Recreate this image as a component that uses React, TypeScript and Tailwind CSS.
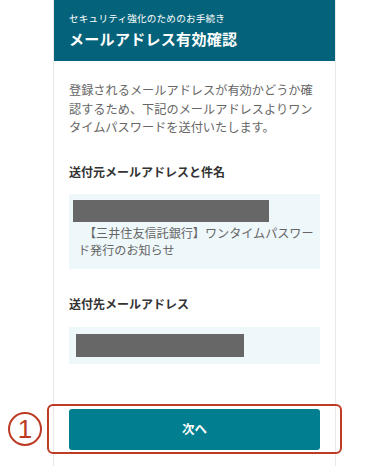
import React from 'react';

const jp = { fontFamily: '"Noto Sans CJK JP", "Noto Sans", sans-serif' };

export default function App() {
  return (
    <div className="relative w-[390px] h-[466px] bg-white overflow-hidden" style={jp}>
      <div className="ml-[53px] w-[283px] min-h-[466px] border-x border-[#e9e9e9] bg-white">
        {/* Header */}
        <div className="bg-[#04637a] pl-[15px] pt-[11px] pb-[11px] text-white">
          <p className="text-[9.6px] leading-[14px] tracking-[0.2px]">セキュリティ強化のためのお手続き</p>
          <h1 className="mt-[3px] text-[15px] leading-[22px] font-bold tracking-[0.3px]">メールアドレス有効確認</h1>
        </div>

        <div className="px-[15px] pt-[20px]">
          <p className="text-[12.2px] leading-[18.5px] text-[#666]">
            登録されるメールアドレスが有効かどうか確認するため、下記のメールアドレスよりワンタイムパスワードを送付いたします。
          </p>

          {/* Sender */}
          <h3 className="mt-[26px] text-[12px] leading-[18px] font-bold text-[#333]">送付元メールアドレスと件名</h3>
          <div className="mt-[13px] bg-[#eef7fa] pl-[9px] pr-[8px] pt-[6px] pb-[10px]">
            <div className="-ml-[5px] w-[196px] h-[22px] bg-[#676767]"></div>
            <p className="mt-[2px] indent-[6px] text-[12.1px] leading-[17.5px] text-[#666]">
              <span className="whitespace-nowrap">【三井住友信託銀行】ワンタイムパスワー</span>
              <br />
              ド発行のお知らせ
            </p>
          </div>

          {/* Recipient */}
          <h3 className="mt-[26px] text-[12px] leading-[18px] font-bold text-[#333]">送付先メールアドレス</h3>
          <div className="mt-[14px] bg-[#eef7fa] px-[7px] py-[7px]">
            <div className="w-[168px] h-[23px] bg-[#676767]"></div>
          </div>

          {/* Next button */}
          <div className="relative mt-[45px]">
            <button className="w-full h-[41px] rounded-[3px] bg-[#017f90] text-white text-[12.5px] font-bold">
              次へ
            </button>
            <div className="absolute -left-[22px] -right-[22px] -top-[5px] -bottom-[4px] border-2 border-[#bd3a24] rounded-[6px] pointer-events-none"></div>
          </div>
        </div>
      </div>

      {/* Annotation number */}
      <div className="absolute left-[8px] top-[412px] w-[34px] h-[34px] rounded-full border-[2.5px] border-[#bd3a24] flex items-center justify-center text-[#bd3a24] text-[26px] leading-none font-normal" style={{ fontFamily: '"Liberation Sans", sans-serif' }}>
        1
      </div>
    </div>
  );
}
